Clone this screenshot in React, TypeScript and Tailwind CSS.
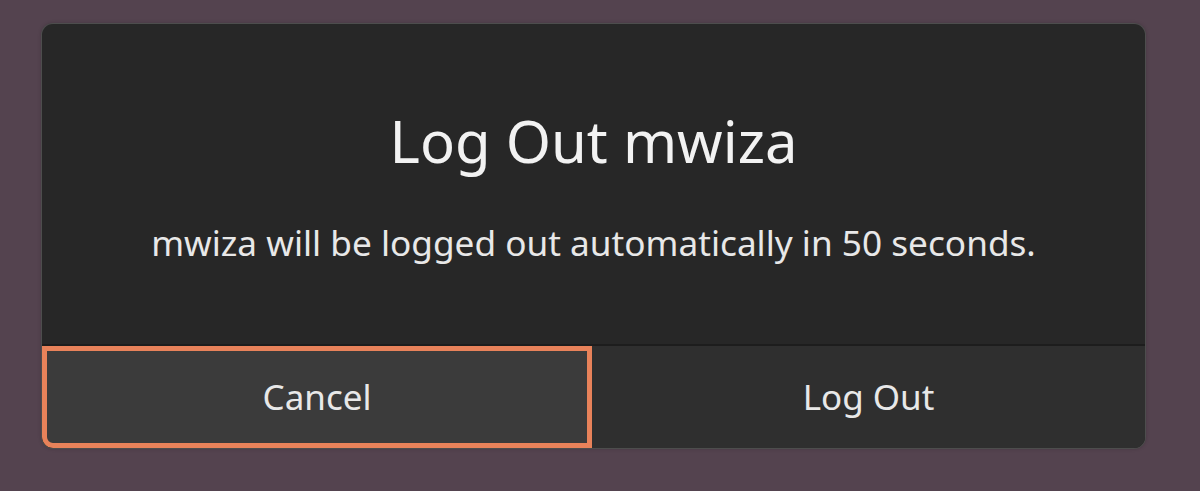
export default function App() {
  const font = { fontFamily: '"Noto Sans", "Open Sans", sans-serif' };
  return (
    <div className="w-[1200px] h-[491px] bg-[#54434f] pl-[42px] pt-[24px]" style={font}>
      <div className="w-[1103px] h-[424px] rounded-[11px] bg-[#272727] shadow-[0_0_0_1px_#4d4d4d,0_0_4px_rgba(0,0,0,0.3)] overflow-hidden flex flex-col">
        <div className="h-[320px] flex flex-col items-center">
          <div className="mt-[88px] text-[58px] leading-[58px] text-[#f2f2f2] whitespace-nowrap">Log Out mwiza</div>
          <div className="mt-[55px] text-[35.2px] leading-[35px] text-[#e8e8e8] whitespace-nowrap">
            mwiza will be logged out automatically in 50 seconds.
          </div>
        </div>
        <div className="h-[2px] bg-[#1d1d1d]" />
        <div className="flex-1 flex">
          <div className="w-[550px] h-full bg-[#3b3b3b] border-[5px] border-[#e8825a] rounded-bl-[11px] flex items-center justify-center text-[35px] text-[#e8e8e8]">
            Cancel
          </div>
          <div className="flex-1 h-full bg-[#2f2f2f] flex items-center justify-center text-[35px] text-[#e8e8e8]">
            Log Out
          </div>
        </div>
      </div>
    </div>
  );
}
